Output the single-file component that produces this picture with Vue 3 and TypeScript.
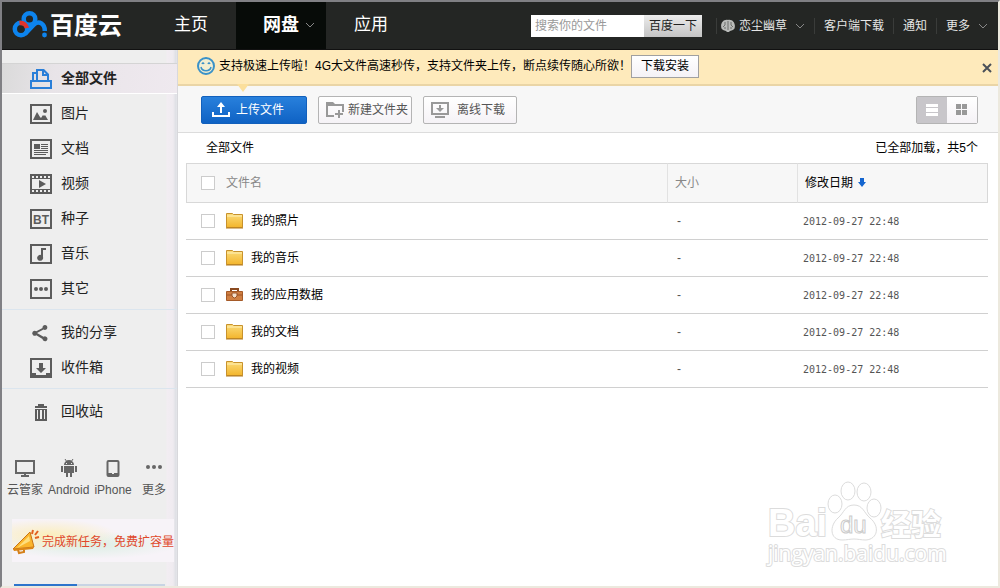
<script setup lang="ts">
import { ref, computed } from 'vue'

interface NavItem {
  label: string
  path: string
  glyph?: string
}

interface FileRow {
  name: string
  kind: 'folder' | 'case'
  date: string
  checked: boolean
}

const frame = 'M0 0h22v20H0zM2 2v16h18V2z'

const groups: NavItem[][] = [
  [
    { label: '全部文件', path: 'M0 11h22v9H0zM2 13v5h18v-5zM2 3h4v2H4v6H2zM6 0h8l5 5v6h-2V7h-5V2H8v9H6zM14 3v2h2z' },
    { label: '图片', path: frame + 'M3 16l4-8 3 5 1 1 2-3 1 1 1-1 3 5zM13 7a2 2 0 1 0 4 0a2 2 0 1 0-4 0z' },
    { label: '文档', path: frame + 'M4 5h6v5H4zM11 5h7v1h-7zM11 7h7v1h-7zM11 9h7v1h-7zM4 11h14v1H4zM4 13h14v1H4zM4 15h12v1H4z' },
    { label: '视频', path: 'M0 0h22v20H0zM2 2v2h2V2zM6 2v2h2V2zM10 2v2h2V2zM14 2v2h2V2zM18 2v2h2V2zM2 5v10h18V5zM2 16v2h2v-2zM6 16v2h2v-2zM10 16v2h2v-2zM14 16v2h2v-2zM18 16v2h2v-2zM9 6l7 4-7 4z' },
    { label: '种子', path: frame, glyph: 'BT' },
    { label: '音乐', path: frame + 'M11 4h5v2h-3v7a3 3 0 1 1-2-2z' },
    { label: '其它', path: frame + 'M4 10a2 2 0 1 0 4 0a2 2 0 1 0-4 0zM9 10a2 2 0 1 0 4 0a2 2 0 1 0-4 0zM14 10a2 2 0 1 0 4 0a2 2 0 1 0-4 0z' },
  ],
  [
    { label: '我的分享', path: 'M15 2a2.5 2.5 0 1 1-1.5 4.6L7 10l6.500 3.800A2.500 2.500 0 1 1 12.500 16L6.300 12.200A2.500 2.500 0 1 1 6.300 8.300L12.500 5A2.500 2.500 0 0 1 15 2z' },
    { label: '收件箱', path: 'M0 0h22v20H0zM2 2v13h4v2h10v-2h4V2zM9 5h4v5h3l-5 5-5-5h3z' },
  ],
  [
    { label: '回收站', path: 'M8 2h6v2h3v2H5V4h3zM5 7h12v12H5zM7 8v9h1V8zM10 8v9h2V8zM14 8v9h1V8z' },
  ],
]

const current = ref('全部文件')
const keyword = ref('')
const showTip = ref(true)
const view = ref<'list' | 'grid'>('list')
const usedPercent = 42

const files = ref<FileRow[]>(
  ['我的照片', '我的音乐', '我的应用数据', '我的文档', '我的视频'].map((name) => ({
    name,
    kind: name === '我的应用数据' ? 'case' : 'folder',
    date: '2012-09-27 22:48',
    checked: false,
  })),
)

const allChecked = computed({
  get: () => files.value.every((f) => f.checked),
  set: (value: boolean) => files.value.forEach((f) => (f.checked = value)),
})
</script>

<template>
  <div class="page">
    <header class="topbar">
      <a class="logo" href="#">
        <svg width="36" height="30" viewBox="0 0 36 30" fill="none" stroke="#0d84ee" stroke-width="4.500" aria-hidden="true">
          <circle cx="17.500" cy="9" r="5.800" />
          <circle cx="9" cy="19" r="6.200" />
          <path d="M13 24L22 14.500C27 10 33 14 32.800 21" />
          <path d="M7.500 13C11 12.500 14 14.500 15 18" stroke="#e0342c" />
          <circle cx="32.500" cy="25" r="2.400" fill="#0d84ee" stroke="none" />
        </svg>
        <span>百度云</span>
      </a>
      <nav class="tabs">
        <a href="#">主页</a>
        <a href="#" class="on">
          网盘
          <svg class="chev" width="10" height="6" viewBox="0 0 10 6" aria-hidden="true"><path d="M1 1l4 4 4-4" /></svg>
        </a>
        <a href="#">应用</a>
      </nav>
      <form class="search" @submit.prevent>
        <input v-model="keyword" type="text" placeholder="搜索你的文件" aria-label="搜索你的文件" />
        <button type="submit">百度一下</button>
      </form>
      <nav class="user">
        <a href="#">
          <svg width="14" height="14" viewBox="0 0 14 14" aria-hidden="true">
            <path d="M7 1c5-1 8 4 6.500 8.500C12 12 9 11 8 13H6C5 11 2 12 .5 9.500C-1 5 2 0 7 1z" fill="#b9bbb9" />
            <path d="M7 2v9M4 3v3L2 8M10 3v3l2 2M4 8v2M10 8v2" stroke="#6c6e6c" fill="none" />
          </svg>
          恋尘幽草
          <svg class="chev" width="10" height="6" viewBox="0 0 10 6" aria-hidden="true"><path d="M1 1l4 4 4-4" /></svg>
        </a>
        <a href="#">客户端下载</a>
        <a href="#">通知</a>
        <a href="#">
          更多
          <svg class="chev" width="10" height="6" viewBox="0 0 10 6" aria-hidden="true"><path d="M1 1l4 4 4-4" /></svg>
        </a>
      </nav>
    </header>

    <div class="body">
      <aside class="side">
        <nav>
          <ul v-for="(group, g) in groups" :key="g">
            <li v-for="item in group" :key="item.label">
              <a href="#" :class="{ on: current === item.label }" @click.prevent="current = item.label">
                <svg width="22" height="20" viewBox="0 0 22 20" fill="currentColor" aria-hidden="true">
                  <path :d="item.path" fill-rule="evenodd" />
                  <text v-if="item.glyph" x="11" y="15" text-anchor="middle" class="glyph">{{ item.glyph }}</text>
                </svg>
                <span>{{ item.label }}</span>
              </a>
            </li>
          </ul>
        </nav>

        <div class="devices">
          <a href="#">
            <svg width="20" height="18" viewBox="0 0 20 18" aria-hidden="true">
              <path d="M1 2h18v12H1zM10 14v2M6 17h8" fill="none" stroke="#666" stroke-width="2" />
            </svg>
            云管家
          </a>
          <a href="#">
            <svg width="16" height="18" viewBox="0 0 16 18" fill="#666" aria-hidden="true">
              <path d="M3 6a5 5 0 0 1 10 0zM3 7h10v7H3zM0 7h2v6H0zM14 7h2v6h-2zM5 14h2v4H5zM9 14h2v4H9z" />
              <path d="M4 0l2 3M12 0l-2 3" stroke="#666" />
              <path d="M5 4h1v1H5zM10 4h1v1h-1z" fill="#eee" />
            </svg>
            Android
          </a>
          <a href="#">
            <svg width="14" height="18" viewBox="0 0 14 18" aria-hidden="true">
              <rect x="1.500" y="2" width="11" height="15" rx="1" fill="none" stroke="#666" stroke-width="2" />
              <path d="M2 14h10v2H2z" fill="#666" /><path d="M6 14h2v1H6z" fill="#eee" />
            </svg>
            iPhone
          </a>
          <a href="#">
            <svg width="16" height="18" viewBox="0 0 16 18" fill="#666" aria-hidden="true">
              <circle cx="2" cy="8" r="2" /><circle cx="8" cy="8" r="2" /><circle cx="14" cy="8" r="2" />
            </svg>
            更多
          </a>
        </div>

        <a class="promo" href="#">
          <svg width="28" height="28" viewBox="0 0 28 28" aria-hidden="true">
            <path d="M1 21L18 4l4 15z" fill="#fbb62c" stroke="#c87414" />
            <path d="M5 20L17 8l1 5z" fill="#ffdf7c" />
            <path d="M1 21l21-2-1 2-19 2z" fill="#dc8614" />
            <path d="M6 22l1 3 5-1v-2" fill="none" stroke="#d5801a" stroke-width="2" />
            <path d="M20 6l1-4M23 7l3-4M23 10l4-1" stroke="#e2601f" stroke-width="2" />
          </svg>
          <span>完成新任务，免费扩容量</span>
        </a>
        <div class="quota" role="progressbar" aria-label="容量" :aria-valuenow="usedPercent">
          <div :style="{ width: usedPercent + '%' }"></div>
        </div>
      </aside>

      <main class="main">
        <div v-if="showTip" class="tip">
          <svg width="18" height="18" viewBox="0 0 18 18" fill="none" stroke="#3b92c8" aria-hidden="true">
            <circle cx="9" cy="9" r="8" fill="#f3efd2" stroke-width="2" />
            <path d="M4 10c1 5 9 5 10 0" stroke-width="1.500" />
            <path d="M5 7q1-2 2 0M11 7q1-2 2 0" stroke-width="1.500" />
          </svg>
          <p>支持极速上传啦！4G大文件高速秒传，支持文件夹上传，断点续传随心所欲！</p>
          <button type="button" class="install">下载安装</button>
          <button type="button" class="close" aria-label="关闭" @click="showTip = false">
            <svg width="10" height="10" viewBox="0 0 10 10"><path d="M1 1l8 8M9 1L1 9" stroke="#4a5058" stroke-width="2" /></svg>
          </button>
        </div>

        <div class="tools">
          <button type="button" class="btn primary">
            <svg width="18" height="16" viewBox="0 0 18 16" fill="#fff" aria-hidden="true">
              <path d="M9 0l4 5h-3v6H8V5H5zM0 10h2v3h14v-3h2v5H0z" />
            </svg>
            上传文件
          </button>
          <button type="button" class="btn">
            <svg width="18" height="16" viewBox="0 0 18 16" fill="#999" aria-hidden="true">
              <path d="M0 0h7l2 2h9v8h-2V4H2v9h6v2H0z" />
              <path d="M12 8h2v3h3v2h-3v3h-2v-3H9v-2h3z" />
            </svg>
            新建文件夹
          </button>
          <button type="button" class="btn">
            <svg width="18" height="16" viewBox="0 0 18 16" fill="#999" aria-hidden="true">
              <path fill-rule="evenodd" d="M0 0h18v13H0zM2 2v9h14V2zM8 3h2v3h3l-4 4-4-4h3zM4 14h10v2H4z" />
            </svg>
            <span class="wide">离线下载</span>
          </button>
          <div class="views">
            <button type="button" aria-label="列表" :class="{ on: view === 'list' }" @click="view = 'list'">
              <svg width="12" height="12" viewBox="0 0 12 12" fill="currentColor"><path d="M0 0h12v3H0zM0 4h12v4H0zM0 9h12v3H0z" /></svg>
            </button>
            <button type="button" aria-label="缩略图" :class="{ on: view === 'grid' }" @click="view = 'grid'">
              <svg width="12" height="12" viewBox="0 0 12 12" fill="currentColor"><path d="M0 0h5v5H0zM6 0h5v5H6zM0 6h5v5H0zM6 6h5v5H6z" /></svg>
            </button>
          </div>
        </div>

        <div class="crumb">
          <span>全部文件</span>
          <span>已全部加载，共{{ files.length }}个</span>
        </div>

        <table class="files">
          <thead>
            <tr>
              <th class="c-check"><input v-model="allChecked" type="checkbox" aria-label="全选" /></th>
              <th class="c-name">文件名</th>
              <th class="c-size">大小</th>
              <th class="c-date">
                修改日期
                <svg width="8" height="9" viewBox="0 0 8 9" aria-hidden="true"><path d="M2 0h4v4h2L4 9 0 4h2z" fill="#1465cf" /></svg>
              </th>
            </tr>
          </thead>
          <tbody>
            <tr v-for="file in files" :key="file.name">
              <td class="c-check"><input v-model="file.checked" type="checkbox" :aria-label="file.name" /></td>
              <td class="c-name">
                <a href="#">
                  <svg v-if="file.kind === 'folder'" width="17" height="16" viewBox="0 0 17 16" aria-hidden="true">
                    <defs>
                      <linearGradient id="folder" x1="0" y1="0" x2="0" y2="1">
                        <stop offset="0" stop-color="#fbdc7a" /><stop offset="1" stop-color="#f3b52c" />
                      </linearGradient>
                    </defs>
                    <path d="M.5.500h6l1 1h9v13H.5z" fill="url(#folder)" stroke="#c8922c" />
                    <path d="M1 3h15" stroke="#fff0b8" />
                    <path d="M0 15h17" stroke="#b47a1c" />
                  </svg>
                  <svg v-else width="17" height="16" viewBox="0 0 17 16" aria-hidden="true">
                    <path d="M5 4V2h7v2" fill="none" stroke="#8a4a20" stroke-width="2" />
                    <path d="M.5 4.500h16v9H.5z" fill="#cf7f42" stroke="#a55a28" />
                    <path d="M1 8h15" stroke="#9c5426" />
                    <path d="M6 6h5v3l-2 2H8L6 9z" fill="#f3e0cc" stroke="#9c5426" />
                  </svg>
                  <span>{{ file.name }}</span>
                </a>
              </td>
              <td class="c-size">-</td>
              <td class="c-date">{{ file.date }}</td>
            </tr>
          </tbody>
        </table>

        <svg class="mark" width="190" height="94" viewBox="0 0 190 94" fill="#fff" stroke="#dcdcdc" stroke-width="2" aria-hidden="true">
          <g paint-order="stroke">
            <text x="6" y="60" class="m-bai">Bai</text>
            <text x="119" y="59" class="m-cn">经验</text>
            <text x="6" y="85" class="m-url">jingyan.baidu.com</text>
          </g>
          <g stroke-width="1">
            <ellipse cx="73" cy="28" rx="7" ry="9" />
            <ellipse cx="86" cy="15" rx="7" ry="9" />
            <ellipse cx="102" cy="16" rx="7" ry="9" />
            <ellipse cx="112" cy="32" rx="7" ry="9" />
            <path d="M92 29c9 0 10 8 16 13 10 8 8 21-4 22-5 0-8-1-12-1s-7 1-12 1c-12 0-13-14-4-22 6-5 7-13 16-13z" />
            <text x="78" y="57" class="m-du">du</text>
          </g>
        </svg>
      </main>
    </div>
  </div>
</template>

<style>
body {
  margin: 0;
}
</style>

<style scoped>
* {
  box-sizing: border-box;
}
.page {
  display: flex;
  flex-direction: column;
  min-height: 100vh;
  border: 2px solid;
  border-color: #808084 #ece9de #ece9de #808084;
  background: #fff;
  color: #000;
  font: 12px/16px "Liberation Sans", "Noto Sans CJK SC", sans-serif;
}
a {
  color: inherit;
  text-decoration: none;
}
button,
input {
  font: inherit;
  margin: 0;
}
button {
  cursor: pointer;
}
svg {
  flex: none;
}

/* top bar */
.topbar {
  display: flex;
  align-items: center;
  height: 48px;
  background: #242624;
  border-bottom: 1px solid #111;
  color: #e6e6e6;
}
.logo {
  display: flex;
  align-items: center;
  width: 144px;
  padding-left: 10px;
  gap: 2px;
  color: #fff;
  font-size: 24px;
  font-weight: 700;
  line-height: 30px;
}
.logo svg {
  margin-bottom: 2px;
}
.tabs {
  display: flex;
  align-self: stretch;
  flex: 1;
}
.tabs a {
  display: flex;
  align-items: center;
  justify-content: center;
  gap: 6px;
  width: 90px;
  padding-bottom: 1px;
  font-size: 17px;
  color: #fff;
}
.tabs a.on {
  padding-left: 16px;
  background: #070b08;
  font-size: 18px;
  font-weight: 700;
}
.chev {
  fill: none;
  stroke: #888;
}
.search {
  display: flex;
  height: 22px;
}
.search input {
  width: 113px;
  padding: 0 4px;
  border: 0;
  border-radius: 0;
  background: #fff;
}
.search input::placeholder {
  color: #999;
}
.search button {
  width: 58px;
  padding: 0;
  border: 0;
  background: linear-gradient(#ececec, #c4c4c4);
  color: #222;
}
.user {
  display: flex;
  align-items: center;
  margin: 0 10px 0 14px;
}
.user a {
  display: flex;
  align-items: center;
  gap: 4px;
  padding: 0 9px;
  border-left: 1px solid #3a3c3a;
}
.user a:first-child {
  padding-left: 4px;
}
.user a:last-child {
  padding-right: 0;
}
.user .chev {
  margin-left: 4px;
}

/* sidebar */
.body {
  display: flex;
  flex: 1;
}
.side {
  width: 175px;
  flex: none;
  background: linear-gradient(90deg, #eee 164px, #f2edf2 165px, #efebf0 171px, #dddfe4 174px, #e8e8ec);
}
.side ul {
  display: grid;
  gap: 4px;
  margin: 0;
  padding: 7px 0 5px;
  list-style: none;
}
.side ul:first-child {
  padding-top: 13px;
}
.side ul + ul {
  border-top: 1px solid #dbe5ee;
}
.side li a {
  display: flex;
  align-items: center;
  gap: 9px;
  height: 31px;
  padding-left: 28px;
  color: #5c5c5c;
  font-size: 14px;
}
.side li span {
  color: #222;
  padding-bottom: 2px;
}
.side li a.on {
  border-top: 1px solid #d4d4d4;
  border-bottom: 1px solid #fff;
  background: linear-gradient(100deg, #dadada, #e8e4e8 30%, #efe9ef);
  color: #2a7fd8;
  font-weight: 700;
}
.glyph {
  font: 700 12px "Liberation Sans", sans-serif;
}
.devices {
  display: flex;
  gap: 5px;
  margin: 27px 11px 0 5px;
  color: #555;
}
.devices a {
  display: flex;
  flex-direction: column;
  align-items: center;
  gap: 5px;
}
.devices a:last-child {
  margin-left: auto;
}
.promo {
  display: flex;
  align-items: center;
  gap: 2px;
  height: 43px;
  margin: 21px 3px 0 10px;
  padding-top: 2px;
  background:
    radial-gradient(ellipse 70px 16px at 36px 16px, #fbeebc, transparent),
    radial-gradient(ellipse 90px 14px at 76px 26px, #dcefe4, transparent),
    #f7f3f8;
  color: #e0482c;
  white-space: nowrap;
}
.quota {
  height: 2px;
  margin: 22px 12px 0;
  background: #c8d4e4;
}
.quota div {
  height: 100%;
  background: #2c74cc;
}

/* main column */
.main {
  position: relative;
  flex: 1;
  min-width: 0;
  border-left: 1px solid #d8d8dc;
  background: #fff;
}
.tip {
  position: relative;
  display: flex;
  align-items: center;
  height: 36px;
  padding: 0 6px 2px 19px;
  background: #feeabb;
  border-bottom: 2px solid #ead5a6;
}
.tip::after {
  content: "";
  position: absolute;
  left: 59px;
  top: 34px;
  border: 6px solid transparent;
  border-top: 8px solid #fbdf9c;
  border-bottom: 0;
}
.tip p {
  margin: 0 0 0 4px;
  white-space: nowrap;
}
.install {
  width: 68px;
  height: 23px;
  padding: 0;
  border: 1px solid #a0a0a0;
  background: linear-gradient(#fff, #f4f2f6);
}
.close {
  display: flex;
  margin: 4px 0 0 auto;
  padding: 0;
  border: 0;
  background: none;
}
.tools {
  display: flex;
  align-items: center;
  gap: 11px;
  height: 47px;
  padding: 2px 20px 0 23px;
  background: #f7f7f7;
  border-bottom: 1px solid #dcdcdc;
}
.btn {
  display: flex;
  align-items: center;
  gap: 4px;
  width: 94px;
  height: 28px;
  padding: 0 0 0 7px;
  border: 1px solid #b4b4b4;
  border-radius: 2px;
  background: linear-gradient(#fff, #f5f2f6);
  color: #555;
  white-space: nowrap;
}
.btn .wide {
  padding-left: 4px;
}
.btn.primary {
  width: 106px;
  padding-left: 10px;
  gap: 6px;
  border-color: #1260bc;
  background: linear-gradient(#2880dc, #0f62c4);
  color: #fff;
}
.views {
  display: flex;
  width: 62px;
  height: 28px;
  margin-left: auto;
  border: 1px solid #b4b4b4;
  border-radius: 2px;
}
.views button {
  display: flex;
  flex: 1;
  align-items: center;
  justify-content: center;
  padding: 0;
  border: 0;
  background: linear-gradient(#fff, #f5f2f6);
  color: #999;
}
.views button.on {
  background: #c8c6ca;
  color: #fff;
}
.crumb {
  display: flex;
  align-items: center;
  justify-content: space-between;
  height: 30px;
  padding: 0 20px 0 28px;
}

/* file table */
.files {
  width: calc(100% - 18px);
  margin-left: 8px;
  border-spacing: 0;
  table-layout: fixed;
}
.files th {
  height: 40px;
  padding: 0;
  border: solid #d8d8d8;
  border-width: 1px 0;
  background: #f7f7f7;
  color: #888;
  font-weight: 400;
  text-align: left;
}
.files td {
  height: 37px;
  padding: 0;
  border-bottom: 1px solid #d0d0d0;
}
.files th:first-child {
  border-left-width: 1px;
}
.files th:last-child {
  border-right-width: 1px;
}
.files td.c-check {
  padding-left: 15px;
}
.files th.c-check {
  width: 40px;
  padding-left: 14px;
}
.files th.c-size {
  width: 130px;
  padding-left: 7px;
  border-left: 1px solid #e2e2e2;
}
.files td.c-size {
  padding-left: 10px;
  color: #555;
}
.files th.c-date {
  width: 191px;
  padding-left: 7px;
  border-left: 1px solid #e2e2e2;
  color: #000;
}
.files th svg {
  margin-left: 2px;
}
.files td.c-date {
  padding: 2px 0 0 6px;
  color: #555;
  font: 10px/16px "DejaVu Sans Mono", monospace;
}
.files td a {
  display: flex;
  align-items: center;
  gap: 8px;
}
.files input {
  display: block;
  appearance: none;
  width: 14px;
  height: 14px;
  border: 1px solid #ccc;
  background: #fff;
}
.files input:checked {
  background: #2c74cc;
}

/* watermark */
.mark {
  position: absolute;
  right: 46px;
  bottom: 16px;
  pointer-events: none;
}
.m-bai {
  font: 700 38px "Liberation Sans", sans-serif;
}
.m-cn {
  font: 700 30px "Noto Sans CJK SC", sans-serif;
}
.m-url {
  font: 21px "Open Sans", sans-serif;
}
.m-du {
  font: 24px "Liberation Sans", sans-serif;
  stroke: #ccc;
}
</style>
